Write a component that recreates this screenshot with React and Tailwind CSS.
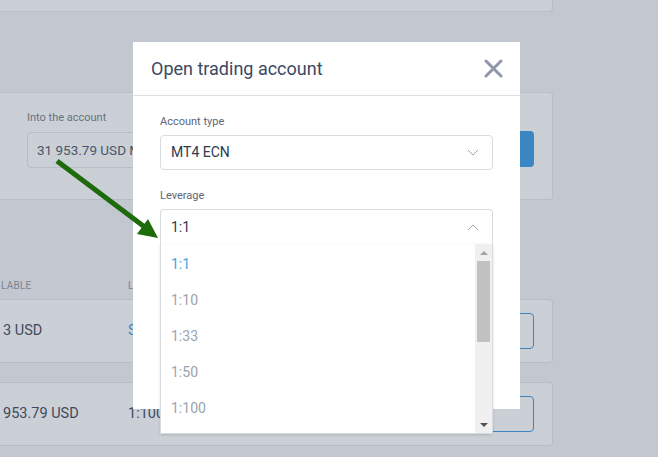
import React from 'react';

const LEVERAGES = ['1:1', '1:10', '1:33', '1:50', '1:100'];

function Chevron({ up = false }) {
  return (
    <svg width="12" height="7" viewBox="0 0 12 7" fill="none">
      <polyline
        points={up ? '1,6 6,1 11,6' : '1,1 6,6 11,1'}
        stroke="#9ba5b4"
        strokeWidth="1"
      />
    </svg>
  );
}

function CloseIcon() {
  return (
    <svg width="19" height="19" viewBox="0 0 19 19">
      <path d="M2 2 L17 17 M17 2 L2 17" stroke="#8e98a7" strokeWidth="3" strokeLinecap="round" />
    </svg>
  );
}

function Scrollbar() {
  return (
    <div className="w-[17px] h-full bg-[#f0f0f0] flex flex-col items-center">
      <div className="h-[17px] flex items-center justify-center">
        <div className="w-0 h-0 border-l-[4px] border-r-[4px] border-b-[4px] border-l-transparent border-r-transparent border-b-[#a3a3a3]" />
      </div>
      <div className="w-[13px] h-[81px] bg-[#c1c1c1]" />
      <div className="flex-1" />
      <div className="h-[17px] flex items-center justify-center">
        <div className="w-0 h-0 border-l-[4px] border-r-[4px] border-t-[4px] border-l-transparent border-r-transparent border-t-[#505050]" />
      </div>
    </div>
  );
}

export default function App() {
  return (
    <div
      className="relative w-[658px] h-[457px] overflow-hidden bg-[#c3c7cf]"
      style={{ fontFamily: 'Roboto, "Liberation Sans", sans-serif' }}
    >
      {/* page behind the overlay */}
      <div className="w-[553px] h-[12px] bg-[#cbd0d7] border-b border-r border-[#b8bdc5] rounded-br" />
      <div className="h-[80px]" />
      <div className="w-[553px] h-[108px] bg-[#cbd0d7] border-y border-r border-[#b8bdc5] rounded-r flex items-start justify-between pl-[27px] pr-[18px]">
        <div className="pt-[18px]">
          <div className="text-[11px] text-[#69717f] leading-[14px]">Into the account</div>
          <div className="mt-[7px] w-[200px] h-[36px] border border-[#b8bdc5] rounded-sm flex items-center pl-[9px] text-[13.5px] text-[#4a5568]">
            31 953.79 USD MT4
          </div>
        </div>
        <div className="mt-[38px] w-[130px] h-[36px] bg-[#3a87c4] rounded" />
      </div>
      <div className="h-[79px]" />
      <div className="w-[553px] h-[20px] flex items-start pt-[1px] leading-[12px] text-[10px] uppercase text-[#7b8392] tracking-wide">
        <span className="w-[128px] pl-[1px]">lable</span>
        <span>L</span>
      </div>
      <div className="w-[553px] h-[64px] bg-[#cbd0d7] border-y border-r border-[#b8bdc5] rounded-r flex items-center pr-[18px] text-[14.5px]">
        <span className="w-[128px] pl-[3px] text-[#3e4a5e]">3 USD</span>
        <span className="text-[#3a87c4]">S</span>
        <div className="ml-auto w-[120px] h-[36px] border border-[#3a87c4] rounded" />
      </div>
      <div className="h-[19px]" />
      <div className="w-[553px] h-[64px] bg-[#cbd0d7] border-y border-r border-[#b8bdc5] rounded-r flex items-center pr-[18px] text-[14.5px]">
        <span className="w-[128px] pl-[3px] text-[#3e4a5e]">953.79 USD</span>
        <span className="text-[#3e4a5e]">1:100</span>
        <div className="ml-auto w-[120px] h-[36px] border border-[#3a87c4] rounded" />
      </div>

      {/* modal */}
      <div className="absolute left-[133px] top-[42px] w-[387px] h-[367px] bg-white">
        <div className="h-[54px] border-b border-[#dcdfe4] flex items-center justify-between pl-[18px] pr-[17px]">
          <span className="text-[18px] text-[#3b4964]">Open trading account</span>
          <CloseIcon />
        </div>
        <div className="px-[27px] pt-[19px]">
          <div className="text-[11px] leading-[14px] text-[#5d6676]">Account type</div>
          <div className="mt-[6px] h-[35px] border border-[#d8dbe0] rounded-sm flex items-center justify-between pl-[10px] pr-[13px]">
            <span className="text-[14px] text-[#2e3a4e]">MT4 ECN</span>
            <Chevron />
          </div>
          <div className="mt-[19px] text-[11px] leading-[14px] text-[#5d6676]">Leverage</div>
          <div className="mt-[6px] h-[35px] border-x border-t border-[#d8dbe0] rounded-t-sm flex items-center justify-between pl-[10px] pr-[13px]">
            <span className="text-[14px] text-[#2e3a4e]">1:1</span>
            <Chevron up />
          </div>
        </div>
      </div>

      {/* leverage dropdown list */}
      <div className="absolute left-[160px] top-[244px] w-[333px] h-[190px] bg-white border-x border-b border-[#d8dbe0] shadow-sm flex">
        <div className="flex-1 overflow-hidden pt-[2px]">
          {LEVERAGES.map((lv, i) => (
            <div
              key={lv}
              className={`h-[36px] flex items-center pl-[10px] text-[14px] ${i === 0 ? 'text-[#47a2e0]' : 'text-[#9aa3b0]'}`}
            >
              {lv}
            </div>
          ))}
        </div>
        <Scrollbar />
      </div>

      {/* annotation arrow */}
      <svg className="absolute inset-0 pointer-events-none" width="658" height="457">
        <line x1="57" y1="161" x2="146" y2="228" stroke="#1d6b0a" strokeWidth="5" />
        <polygon points="158,238 137,234 148,219" fill="#1d6b0a" />
      </svg>
    </div>
  );
}
